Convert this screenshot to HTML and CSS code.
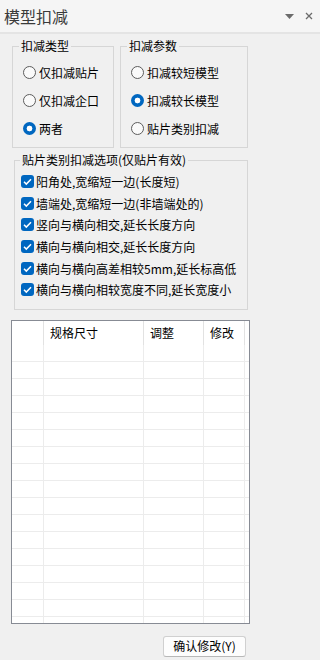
FILE: index.html
```html
<!DOCTYPE html>
<html lang="zh-CN">
<head>
    <meta charset="UTF-8">
    <meta name="viewport" content="width=device-width, initial-scale=1.0">
    <title>模型扣减</title>
    <link rel="stylesheet" href="styles.css">
</head>
<body>
    <div class="titlebar">
        <span class="title">模型扣减</span>
        <span class="tools">
            <svg width="9" height="5" viewBox="0 0 9 5"><path d="M0 0h9L4.5 5z" fill="#6b6b6b"/></svg>
            <svg width="8" height="8" viewBox="0 0 8 8"><path d="M1 1l6 6M7 1L1 7" stroke="#6b6b6b" stroke-width="1.3"/></svg>
        </span>
    </div>

    <div class="panel">
        <div class="group-row">
            <fieldset class="group group-type">
                <legend>扣减类型</legend>
                <label class="opt"><span class="radio"></span>仅扣减贴片</label>
                <label class="opt"><span class="radio"></span>仅扣减企口</label>
                <label class="opt"><span class="radio on"></span>两者</label>
            </fieldset>
            <fieldset class="group group-param">
                <legend>扣减参数</legend>
                <label class="opt"><span class="radio"></span>扣减较短模型</label>
                <label class="opt"><span class="radio on"></span>扣减较长模型</label>
                <label class="opt"><span class="radio"></span>贴片类别扣减</label>
            </fieldset>
        </div>

        <fieldset class="group group-options">
            <legend>贴片类别扣减选项(仅贴片有效)</legend>
            <label class="check"><span class="box"><svg width="13" height="13" viewBox="0 0 13 13"><path d="M3 6.8l2.3 2.3L10 4.3" fill="none" stroke="#fff" stroke-width="1.5"/></svg></span>阳角处,宽缩短一边(长度短)</label>
            <label class="check"><span class="box"><svg width="13" height="13" viewBox="0 0 13 13"><path d="M3 6.8l2.3 2.3L10 4.3" fill="none" stroke="#fff" stroke-width="1.5"/></svg></span>墙端处,宽缩短一边(非墙端处的)</label>
            <label class="check"><span class="box"><svg width="13" height="13" viewBox="0 0 13 13"><path d="M3 6.8l2.3 2.3L10 4.3" fill="none" stroke="#fff" stroke-width="1.5"/></svg></span>竖向与横向相交,延长长度方向</label>
            <label class="check"><span class="box"><svg width="13" height="13" viewBox="0 0 13 13"><path d="M3 6.8l2.3 2.3L10 4.3" fill="none" stroke="#fff" stroke-width="1.5"/></svg></span>横向与横向相交,延长长度方向</label>
            <label class="check"><span class="box"><svg width="13" height="13" viewBox="0 0 13 13"><path d="M3 6.8l2.3 2.3L10 4.3" fill="none" stroke="#fff" stroke-width="1.5"/></svg></span>横向与横向高差相较5mm,延长标高低</label>
            <label class="check"><span class="box"><svg width="13" height="13" viewBox="0 0 13 13"><path d="M3 6.8l2.3 2.3L10 4.3" fill="none" stroke="#fff" stroke-width="1.5"/></svg></span>横向与横向相较宽度不同,延长宽度小</label>
        </fieldset>

        <div class="grid-wrap">
            <table class="grid">
                <thead>
                    <tr><th class="c0"></th><th class="c1">规格尺寸</th><th class="c2">调整</th><th class="c3">修改</th><th class="c4"></th></tr>
                </thead>
                <tbody>
                    <tr><td class="c0"></td><td class="c1"></td><td class="c2"></td><td class="c3"></td><td class="c4"></td></tr>
                    <tr><td class="c0"></td><td class="c1"></td><td class="c2"></td><td class="c3"></td><td class="c4"></td></tr>
                    <tr><td class="c0"></td><td class="c1"></td><td class="c2"></td><td class="c3"></td><td class="c4"></td></tr>
                    <tr><td class="c0"></td><td class="c1"></td><td class="c2"></td><td class="c3"></td><td class="c4"></td></tr>
                    <tr><td class="c0"></td><td class="c1"></td><td class="c2"></td><td class="c3"></td><td class="c4"></td></tr>
                    <tr><td class="c0"></td><td class="c1"></td><td class="c2"></td><td class="c3"></td><td class="c4"></td></tr>
                    <tr><td class="c0"></td><td class="c1"></td><td class="c2"></td><td class="c3"></td><td class="c4"></td></tr>
                    <tr><td class="c0"></td><td class="c1"></td><td class="c2"></td><td class="c3"></td><td class="c4"></td></tr>
                    <tr><td class="c0"></td><td class="c1"></td><td class="c2"></td><td class="c3"></td><td class="c4"></td></tr>
                    <tr><td class="c0"></td><td class="c1"></td><td class="c2"></td><td class="c3"></td><td class="c4"></td></tr>
                    <tr><td class="c0"></td><td class="c1"></td><td class="c2"></td><td class="c3"></td><td class="c4"></td></tr>
                    <tr><td class="c0"></td><td class="c1"></td><td class="c2"></td><td class="c3"></td><td class="c4"></td></tr>
                    <tr><td class="c0"></td><td class="c1"></td><td class="c2"></td><td class="c3"></td><td class="c4"></td></tr>
                    <tr><td class="c0"></td><td class="c1"></td><td class="c2"></td><td class="c3"></td><td class="c4"></td></tr>
                    <tr><td class="c0"></td><td class="c1"></td><td class="c2"></td><td class="c3"></td><td class="c4"></td></tr>
                    <tr><td class="c0"></td><td class="c1"></td><td class="c2"></td><td class="c3"></td><td class="c4"></td></tr>
                    <tr><td class="c0"></td><td class="c1"></td><td class="c2"></td><td class="c3"></td><td class="c4"></td></tr>
                </tbody>
            </table>
        </div>

        <div class="actions">
            <button type="button" class="confirm">确认修改(Y)</button>
        </div>
    </div>
</body>
</html>
```

FILE: styles.css
```css
* {
    box-sizing: border-box;
    margin: 0;
    padding: 0;
}

body {
    background-color: #f0f0f0;
    font-family: "Noto Sans CJK SC", "Noto Sans", sans-serif;
    font-size: 12px;
    color: #000000;
    width: 320px;
}

.titlebar {
    height: 34px;
    background-color: #f5f5f5;
    border-bottom: 2px solid #e4e4e4;
    display: flex;
    align-items: center;
    justify-content: space-between;
    padding: 0 7px 0 4px;
}

.title {
    font-size: 16px;
    line-height: 20px;
    color: #3a3a3a;
}

.tools {
    display: flex;
    align-items: center;
    gap: 11px;
}

.panel {
    padding: 5px 0 0 12px;
}

.group-row {
    display: flex;
    gap: 6px;
}

.group {
    border: 1px solid #d6d6d6;
}

.group legend {
    line-height: 14px;
    padding: 0 2px;
    margin-left: 6px;
}

.group-type {
    width: 102px;
    padding: 5px 0 5px 0;
}

.group-param {
    width: 128px;
    padding: 5px 0 5px 0;
}

.opt {
    display: flex;
    align-items: center;
    gap: 3px;
    height: 28px;
    padding-left: 10px;
}

.radio {
    width: 13px;
    height: 13px;
    border-radius: 50%;
    border: 1px solid #5c5c5c;
    background-color: #fafafa;
    flex-shrink: 0;
}

.radio.on {
    border: none;
    background: radial-gradient(circle, #ffffff 0 2.6px, #0067c0 3.2px);
}

.group-options {
    width: 234px;
    margin: 5px 0 0 2px;
    padding: 4px 0 8px 0;
}

.group-options legend {
    margin-left: 5px;
}

.check {
    display: flex;
    align-items: center;
    gap: 2px;
    height: 21.6px;
    padding-left: 6px;
    white-space: nowrap;
}

.box {
    width: 13px;
    height: 13px;
    border-radius: 3px;
    background-color: #0067c0;
    display: flex;
    flex-shrink: 0;
}

.grid-wrap {
    width: 239px;
    height: 304px;
    margin: 10px 0 0 -1px;
    border: 1px solid #878b94;
    background-color: #ffffff;
    overflow: hidden;
}

.grid {
    width: 237px;
    table-layout: fixed;
    border-spacing: 0;
}

.grid th {
    height: 24px;
    font-weight: normal;
    text-align: left;
    padding-left: 6px;
    border-right: 1px solid #e2e2e2;
}

.grid td {
    height: 17px;
    border-right: 1px solid #ececec;
    border-bottom: 1px solid #ececec;
}

.grid .c0 { width: 32px; }
.grid .c1 { width: 100px; }
.grid .c2 { width: 60px; }
.grid .c3 { width: 41px; }
.grid .c4 { width: 4px; border-right: none; }

.actions {
    display: flex;
    justify-content: flex-end;
    width: 234px;
    margin-top: 12px;
}

.confirm {
    width: 83px;
    height: 21px;
    font-family: inherit;
    font-size: 12px;
    color: #000000;
    background-color: #fdfdfd;
    border: 1px solid #d0d0d0;
    border-bottom-color: #b8b8b8;
    border-radius: 3px;
    line-height: 18px;
}
```
